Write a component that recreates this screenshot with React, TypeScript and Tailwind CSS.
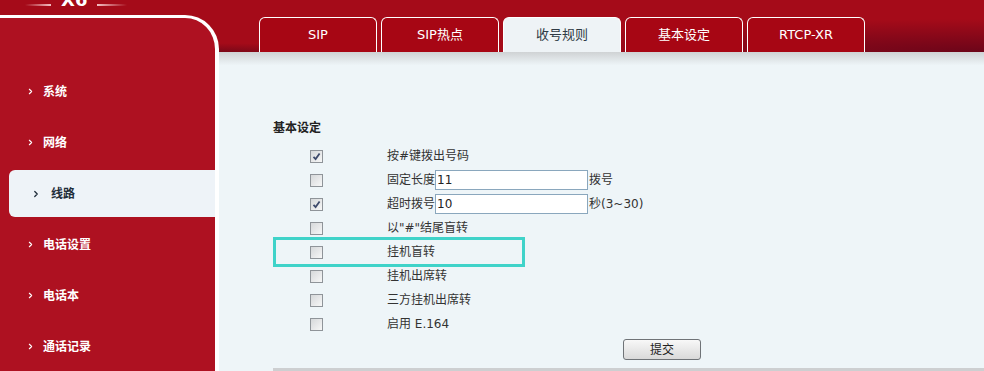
import { ChevronRight } from 'lucide-react';

const menu = ['系统', '网络', '线路', '电话设置', '电话本', '通话记录'];
const tabs = ['SIP', 'SIP热点', '收号规则', '基本设定', 'RTCP-XR'];

const rows = [
  { checked: true, label: '按#键拨出号码' },
  { checked: false, label: '固定长度', input: '11', suffix: '拨号' },
  { checked: true, label: '超时拨号', input: '10', suffix: '秒(3~30)' },
  { checked: false, label: '以"#"结尾盲转' },
  { checked: false, label: '挂机盲转' },
  { checked: false, label: '挂机出席转' },
  { checked: false, label: '三方挂机出席转' },
  { checked: false, label: '启用 E.164' },
];

function Checkbox({ checked }: { checked: boolean }) {
  return (
    <span className="flex h-[13px] w-[13px] items-center justify-center border border-[#8f9499] bg-[linear-gradient(135deg,#d6d8da,#f7f7f7)]">
      {checked && (
        <svg width="9" height="9" viewBox="0 0 9 9">
          <path d="M1.5 4.8 L3.6 7 L7.6 1.5" fill="none" stroke="#3d4a6b" strokeWidth="1.8" />
        </svg>
      )}
    </span>
  );
}

export default function App() {
  return (
    <div
      className="relative flex h-[371px] w-[984px] overflow-hidden bg-[#a50b19] text-[12px]"
      style={{ fontFamily: '"DejaVu Sans", "Noto Sans CJK SC", sans-serif' }}
    >
      {/* logo, cut off at the top */}
      <div className="absolute left-[25px] top-0 flex items-center gap-[10px]">
        <span className="h-[2px] w-[26px] bg-[linear-gradient(90deg,transparent,#f3c0c4)]" />
        <span className="-mt-[10px] text-[18px] font-bold leading-[20px] text-white">X6</span>
        <span className="h-[2px] w-[30px] bg-[linear-gradient(90deg,#f3c0c4,transparent)]" />
      </div>

      {/* sidebar */}
      <div className="w-[219px] shrink-0 pt-[15px]">
        <div className="h-full rounded-tr-[34px] border-r-[4px] border-t-[3px] border-white bg-[#ae1121] pt-[48px]">
          {menu.map((item) => {
            const active = item === '线路';
            return (
              <div key={item} className="flex h-[51px] items-center">
                {active ? (
                  <div className="ml-[9px] flex h-[47px] w-full items-center rounded-l-[6px] bg-[#eef3f8] pl-[22px] font-bold text-[#1f2d3a]">
                    <ChevronRight className="h-[10px] w-[10px]" strokeWidth={3} />
                    <span className="ml-[10px]">{item}</span>
                  </div>
                ) : (
                  <div className="flex items-center pl-[26px] font-bold text-white">
                    <ChevronRight className="h-[9px] w-[9px]" strokeWidth={3} />
                    <span className="ml-[8px]">{item}</span>
                  </div>
                )}
              </div>
            );
          })}
        </div>
      </div>

      {/* main */}
      <div className="flex min-h-0 flex-1 flex-col">
        <div className="flex h-[52px] shrink-0 items-end gap-[4px] bg-[radial-gradient(ellipse_at_100%_100%,#6c0519_0%,transparent_45%),radial-gradient(ellipse_at_0%_100%,#7a0818_0%,transparent_12%)] pl-[40px]">
          {tabs.map((t) => {
            const active = t === '收号规则';
            return (
              <div
                key={t}
                className={`flex h-[35px] w-[118px] items-center justify-center rounded-t-[6px] border-x-[1.5px] border-t-[1.5px] border-white text-[13px] ${
                  active ? 'bg-[#eef3f6] text-[#2f3a44]' : 'bg-[#a70614] text-white'
                }`}
              >
                {t}
              </div>
            );
          })}
        </div>
        <div className="h-[13px] shrink-0 bg-[linear-gradient(180deg,#cfd2d4,#edf4f7)]" />
        <div className="relative flex-1 bg-[#eef5f8] pl-[54px] pt-[55px] text-[#333]">
          <div className="mb-[8px] font-bold leading-[16px] text-[#222]">基本设定</div>
          {rows.map((r) => (
            <div key={r.label} className="flex h-[24px] items-center">
              <div className="w-[114px] pl-[37px]">
                <Checkbox checked={r.checked} />
              </div>
              <span>{r.label}</span>
              {r.input && (
                <>
                  <div className="flex h-[20px] w-[153px] items-center border border-[#8aa7bd] bg-white pl-[1px] text-[#222]">
                    {r.input}
                  </div>
                  <span className="ml-[1px]">{r.suffix}</span>
                </>
              )}
            </div>
          ))}
          <div className="mt-[3px] flex pl-[350px]">
            <button className="h-[21px] w-[78px] rounded-[3px] border border-[#6f7377] bg-[linear-gradient(180deg,#f8f8f8,#d9d9d9)] text-[12px] text-[#222]">
              提交
            </button>
          </div>
          <div className="mt-[8px] h-[4px] bg-[#cdcfd1]" />

          {/* highlight overlay */}
          <div className="pointer-events-none absolute left-[54px] top-[172px] h-[30px] w-[252px] border-[3px] border-[#3fd3c9]" />
        </div>
      </div>
    </div>
  );
}
